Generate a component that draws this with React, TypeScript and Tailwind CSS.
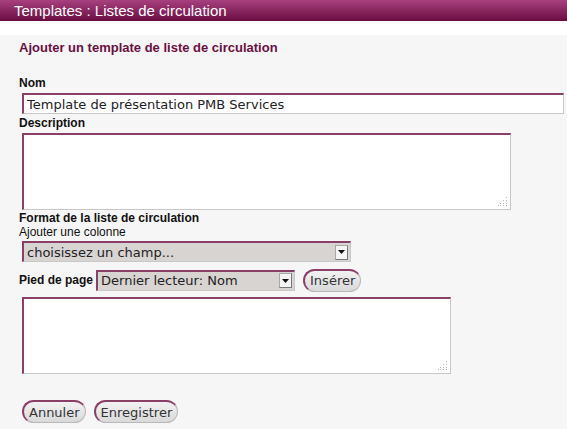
const fieldBorder =
  "border border-t-2 border-l-2 border-t-[#8a3f66] border-l-[#8a3f66] border-r-[#c8c8c8] border-b-[#c8c8c8]";

const SelectBox = ({ text, width }: { text: string; width: string }) => (
  <div
    className={`${width} h-[21px] flex items-center justify-between bg-[#d8d4d2] ${fieldBorder} pl-[3px] pr-[2px]`}
  >
    <span className="text-[13px] text-[#222] font-['DejaVu_Sans',sans-serif] leading-none">
      {text}
    </span>
    <span className="w-[13px] h-[15px] bg-[#f4f4f4] border border-[#a8a8a8] border-r-[#777] border-b-[#777] flex items-center justify-center">
      <svg width="7" height="4" viewBox="0 0 7 4">
        <path d="M0 0 L7 0 L3.5 4 Z" fill="#111" />
      </svg>
    </span>
  </div>
);

const Pill = ({ label }: { label: string }) => (
  <button className="h-[23px] px-[5px] rounded-full border border-[#b9b9b9] border-l-[2px] border-t-[2px] border-l-[#8a3f66] border-t-[#8a3f66] bg-gradient-to-b from-[#f2f2f2] to-[#d9d9d9] text-[13px] text-[#333] font-['DejaVu_Sans',sans-serif] leading-none">
    {label}
  </button>
);

const Resize = () => (
  <svg className="absolute right-[2px] bottom-[2px]" width="10" height="10" viewBox="0 0 10 10">
    <g fill="#b8b8b8">
      <rect x="8" y="0" width="1" height="1" />
      <rect x="8" y="3" width="1" height="1" />
      <rect x="5" y="3" width="1" height="1" />
      <rect x="8" y="6" width="1" height="1" />
      <rect x="5" y="6" width="1" height="1" />
      <rect x="2" y="6" width="1" height="1" />
      <rect x="8" y="8" width="1" height="1" />
      <rect x="5" y="8" width="1" height="1" />
      <rect x="2" y="8" width="1" height="1" />
      <rect x="0" y="8" width="1" height="1" />
    </g>
  </svg>
);

export default function App() {
  return (
    <div className="w-[567px] h-[429px] bg-white font-['Liberation_Sans',Arial,sans-serif] overflow-hidden">
      <div className="h-[21px] bg-gradient-to-b from-[#a8407f] to-[#6a0a42] flex items-center pl-[14px]">
        <span className="text-white text-[15px] leading-none">Templates : Listes de circulation</span>
      </div>
      <div className="mt-[14px] bg-[#f6f6f6] h-[394px] px-[19px] pt-[5px]">
        <h1 className="text-[#6b1042] font-bold text-[13px] leading-[16px]">
          Ajouter un template de liste de circulation
        </h1>

        <div className="mt-[20px] text-[12px] font-bold text-[#111] leading-[14px]">Nom</div>
        <div className={`mt-[3px] ml-[3px] w-[542px] h-[21px] bg-white ${fieldBorder} flex items-center pl-[3px]`}>
          <span className="text-[13px] text-[#222] font-['DejaVu_Sans',sans-serif] leading-none">
            Template de présentation PMB Services
          </span>
        </div>

        <div className="mt-[2px] text-[12px] font-bold text-[#111] leading-[14px]">Description</div>
        <div className={`relative mt-[3px] ml-[3px] w-[489px] h-[77px] bg-white ${fieldBorder}`}>
          <Resize />
        </div>

        <div className="mt-[1px] text-[12px] font-bold text-[#111] leading-[14px]">
          Format de la liste de circulation
        </div>
        <div className="text-[12px] text-[#111] leading-[14px]">Ajouter une colonne</div>
        <div className="mt-[2px] ml-[3px]">
          <SelectBox text="choisissez un champ..." width="w-[329px]" />
        </div>

        <div className="mt-[6px] flex items-center">
          <span className="text-[12px] font-bold text-[#111] mr-[3px]">Pied de page</span>
          <SelectBox text="Dernier lecteur: Nom" width="w-[199px]" />
          <span className="ml-[8px]">
            <Pill label="Insérer" />
          </span>
        </div>

        <div className={`relative mt-[5px] ml-[3px] w-[429px] h-[77px] bg-white ${fieldBorder}`}>
          <Resize />
        </div>

        <div className="mt-[26px] ml-[3px] flex gap-[8px]">
          <Pill label="Annuler" />
          <Pill label="Enregistrer" />
        </div>
      </div>
    </div>
  );
}
